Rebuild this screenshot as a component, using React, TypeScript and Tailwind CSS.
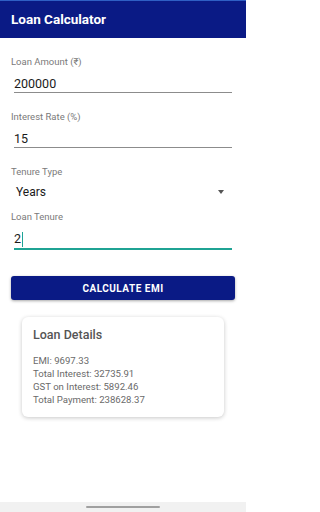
import React from 'react';

const font = { fontFamily: 'Roboto, "Noto Sans", sans-serif' };

function Field({ label, value, focused }: { label: string; value: string; focused?: boolean }) {
  return (
    <div className="flex flex-col">
      <div className="h-[12px] text-[9.5px] leading-[12px] text-[#7a7a7a]">{label}</div>
      <div
        className={
          'mt-[8px] ml-[3px] w-[218px] flex items-center ' +
          (focused ? 'h-[19px] border-b-2 border-[#1fa394]' : 'h-[17px] border-b border-[#8c8c8c]')
        }
      >
        <span className="text-[12.5px] leading-[16px] text-[#1a1a1a] -mt-[1px]">{value}</span>
        {focused && <span className="ml-[0.5px] w-[1.5px] h-[15px] bg-[#1fa394]" />}
      </div>
    </div>
  );
}

export default function App() {
  return (
    <div className="w-[246px] h-[512px] bg-white flex flex-col overflow-hidden" style={font}>
      {/* App bar */}
      <div className="h-[38px] bg-[#0a1a85] border-t border-[#2f5fc4] flex items-center px-[11px]">
        <span className="text-white text-[13.5px] font-bold">Loan Calculator</span>
      </div>

      <div className="flex flex-col px-[11px]">
        <div className="mt-[18px]">
          <Field label="Loan Amount (₹)" value="200000" />
        </div>
        <div className="mt-[18px]">
          <Field label="Interest Rate (%)" value="15" />
        </div>

        {/* Tenure type select */}
        <div className="mt-[18px] flex flex-col">
          <div className="h-[12px] text-[9.5px] leading-[12px] text-[#7a7a7a]">Tenure Type</div>
          <div className="mt-[6px] h-[16px] ml-[5px] w-[216px] flex items-center justify-between">
            <span className="text-[12px] leading-[16px] text-[#1a1a1a]">Years</span>
            <span className="mr-[8px] w-0 h-0 border-l-[3.5px] border-r-[3.5px] border-t-[4px] border-l-transparent border-r-transparent border-t-[#555]" />
          </div>
        </div>

        <div className="mt-[11px]">
          <Field label="Loan Tenure" value="2" focused />
        </div>

        {/* Button */}
        <button className="mt-[26px] h-[24px] w-[224px] rounded-[3px] bg-[#0a1a85] text-white text-[10px] font-bold tracking-[0.5px] shadow-[0_1px_3px_rgba(0,0,0,0.35)] flex items-center justify-center">
          CALCULATE EMI
        </button>
      </div>

      {/* Card */}
      <div className="mt-[17px] ml-[22px] w-[202px] h-[100px] rounded-[6px] bg-white shadow-[0_1px_4px_rgba(0,0,0,0.22)] px-[11px] pt-[10px]">
        <div className="text-[12.5px] leading-[16px] font-medium text-[#555]">Loan Details</div>
        <div className="mt-[11px] flex flex-col text-[9.6px] leading-[13px] text-[#6a6a6a]">
          <span>EMI: 9697.33</span>
          <span>Total Interest: 32735.91</span>
          <span>GST on Interest: 5892.46</span>
          <span>Total Payment: 238628.37</span>
        </div>
      </div>

      <div className="flex-1" />

      {/* Gesture nav bar */}
      <div className="h-[10px] bg-[#f1f1f1] flex justify-center pt-[4px]">
        <div className="w-[74px] h-[2px] rounded-full bg-[#a0a0a0]" />
      </div>
    </div>
  );
}
